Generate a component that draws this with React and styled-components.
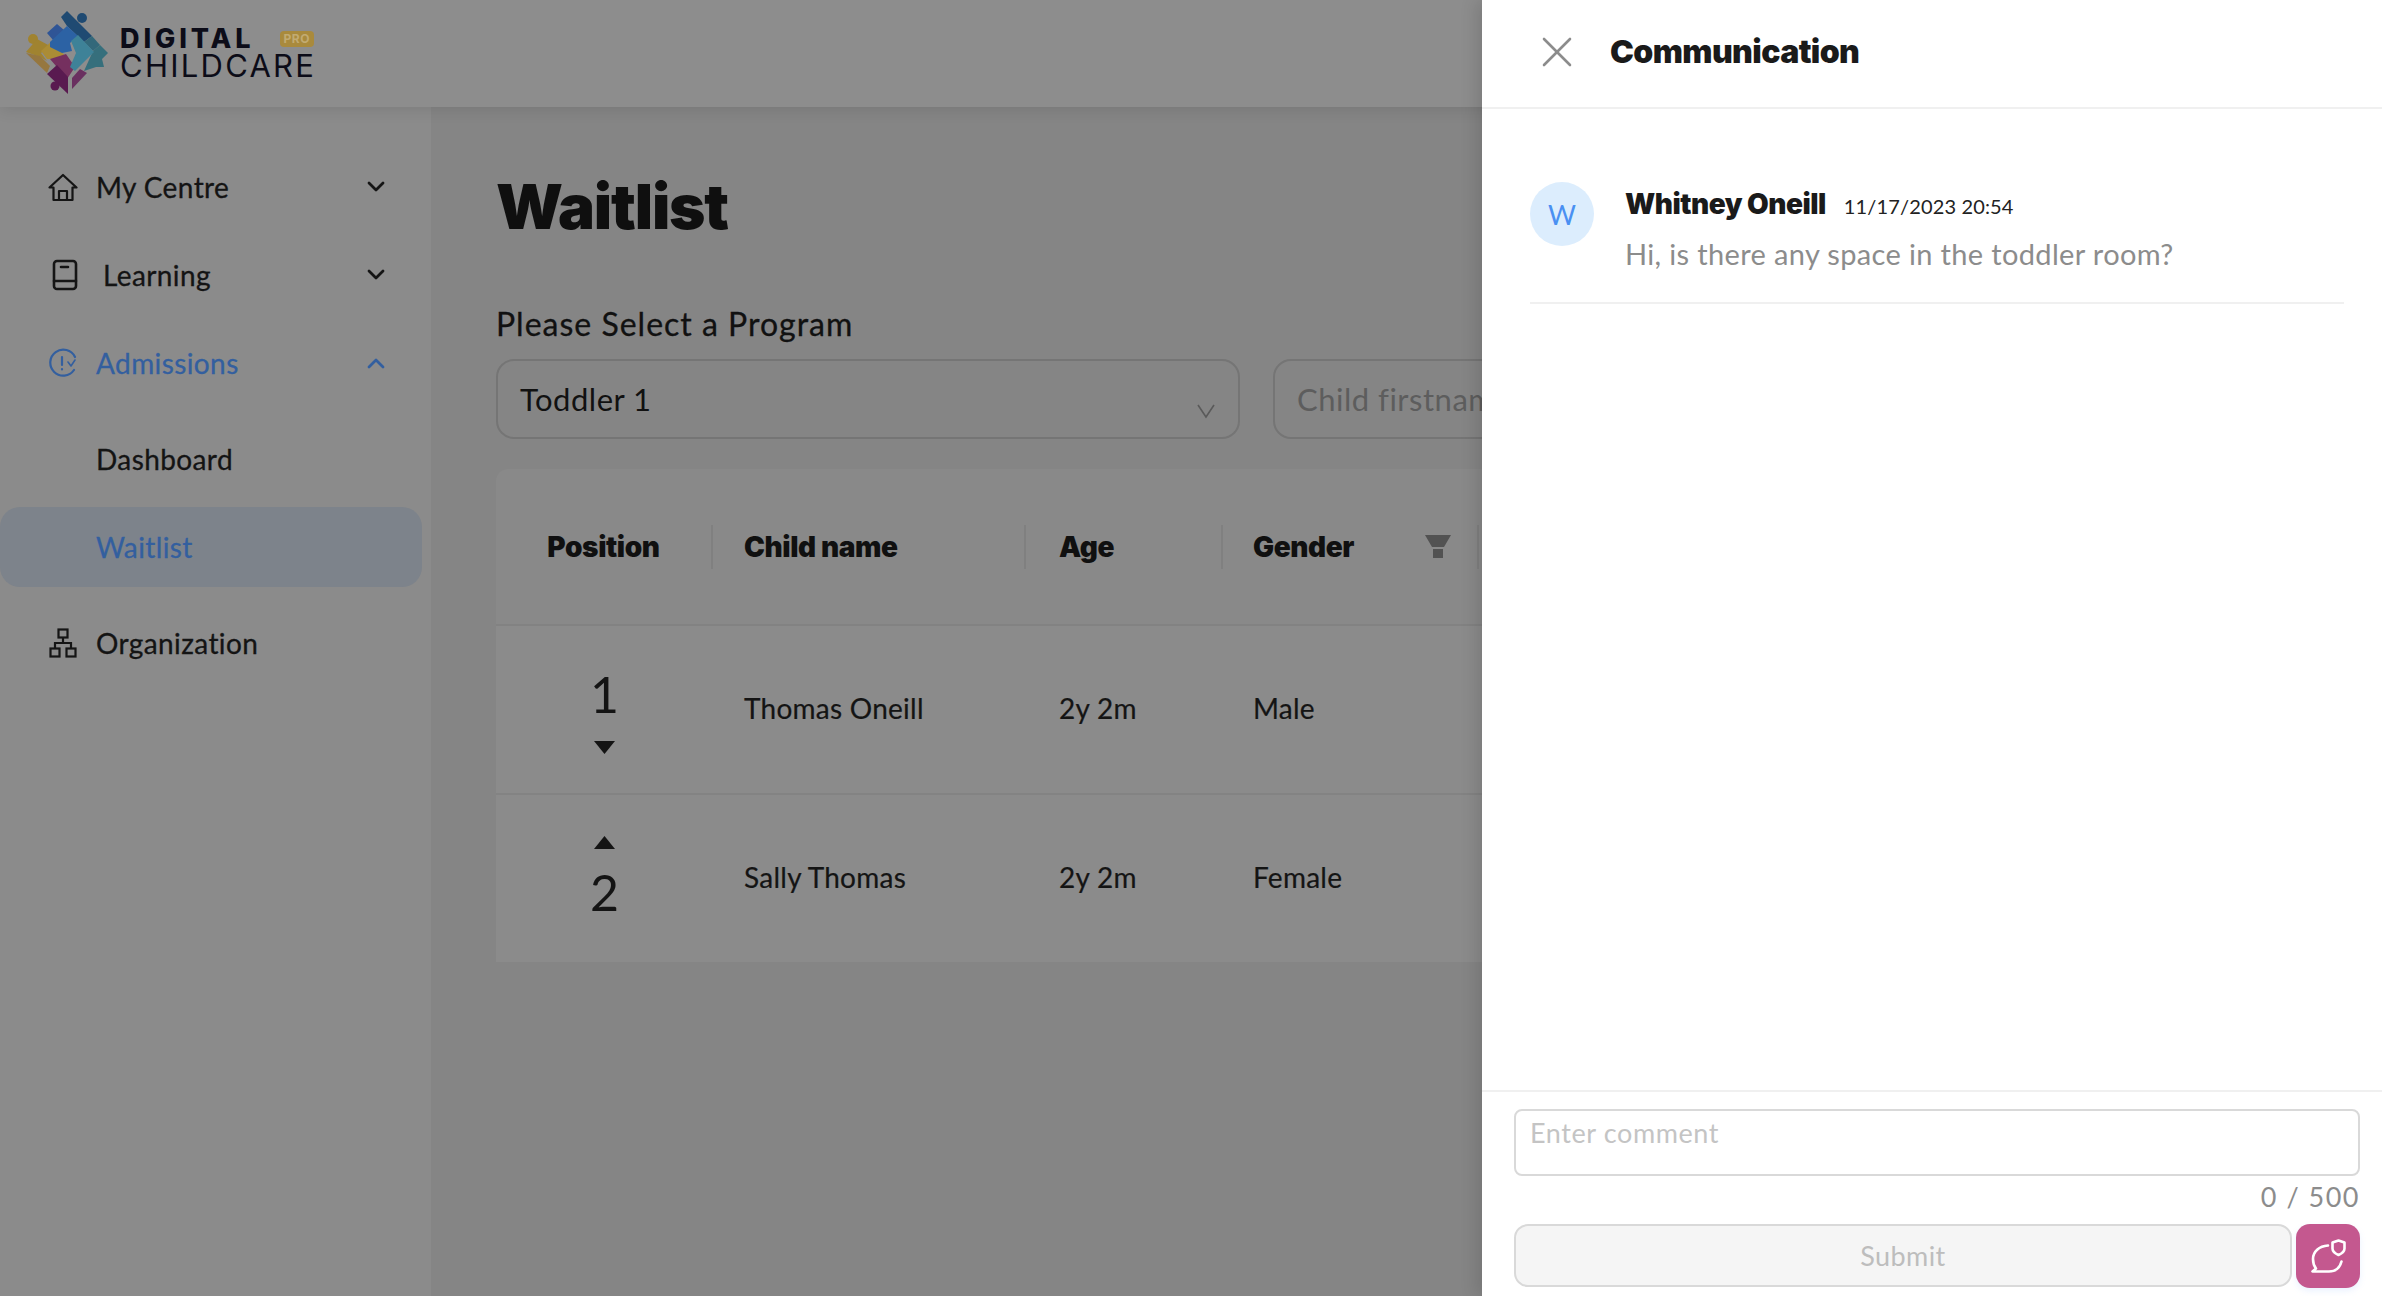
import React from 'react'
import styled, { createGlobalStyle } from 'styled-components'
import { X } from 'lucide-react'

const GlobalStyle = createGlobalStyle`
  html, body {
    margin: 0;
    padding: 0;
    height: 100%;
    overflow: hidden;
    font-family: 'Lato', 'Liberation Sans', sans-serif;
    background: #858585;
  }
  * { box-sizing: border-box; }
`

const Page = styled.div`
  position: relative;
  width: 2382px;
  height: 1296px;
  overflow: hidden;
  display: flex;
  flex-direction: column;
`

const Header = styled.header`
  height: 107px;
  flex: none;
  background: #8d8d8d;
  box-shadow: 0 3px 14px rgba(0, 0, 0, 0.1);
  display: flex;
  align-items: center;
  padding: 0 0 2px 26px;
  gap: 10px;
  z-index: 2;
`

const LogoText = styled.div`
  display: flex;
  flex-direction: column;
  width: 194px;
  font-family: 'Inter', sans-serif;
  color: #0c0c18;
`

const LogoTop = styled.div`
  display: flex;
  align-items: center;
  justify-content: space-between;
  font-size: 27px;
  line-height: 27px;
  font-weight: 800;
  letter-spacing: 3.9px;
`

const ProBadge = styled.span`
  height: 16px;
  padding: 0 4px;
  border-radius: 4px;
  background: #a98a3c;
  color: #c2ab72;
  font-size: 12px;
  line-height: 16px;
  font-weight: 700;
  letter-spacing: 0.5px;
`

const LogoBottom = styled.div`
  font-size: 31px;
  line-height: 28px;
  font-weight: 400;
  letter-spacing: 2.25px;
  white-space: nowrap;
`

const Body = styled.div`
  flex: 1;
  display: flex;
  min-height: 0;
`

const Sidebar = styled.aside`
  width: 431px;
  flex: none;
  background: #8b8b8b;
  padding: 40px 9px 0 0;
  display: flex;
  flex-direction: column;
  gap: 8px;
  box-shadow: 1px 0 0 #858585;
`

const NavItem = styled.div`
  height: 80px;
  display: flex;
  align-items: center;
  padding: 0 32px 0 96px;
  border-radius: 20px;
  font-size: 28px;
  letter-spacing: 0.4px;
  -webkit-text-stroke: 0.3px currentColor;
  color: ${p => (p.$active ? '#335f9f' : '#141414')};
  background: ${p => (p.$selected ? '#7d838b' : 'transparent')};
`

const NavIcon = styled.span`
  width: 32px;
  margin-left: ${p => p.$left || -49}px;
  margin-right: ${p => p.$right || 17}px;
  display: flex;
  justify-content: center;
`

const Chevron = styled.svg`
  margin-left: auto;
  margin-right: 4px;
  width: 20px;
  height: 14px;
`

const SubMenu = styled.div`
  display: flex;
  flex-direction: column;
  gap: 8px;
  margin: 8px 0;
`

const Main = styled.main`
  flex: 1;
  min-width: 0;
  padding: 64px 0 0 65px;
  background: #858585;
`

const Title = styled.h1`
  margin: 0 0 63px;
  font-family: 'Inter', sans-serif;
  font-size: 62px;
  line-height: 72px;
  font-weight: 900;
  color: #0f0f0f;
  letter-spacing: -1.2px;
`

const Label = styled.div`
  font-size: 32px;
  line-height: 36px;
  letter-spacing: 1px;
  -webkit-text-stroke: 0.3px currentColor;
  color: #111;
  margin-bottom: 17px;
`

const Filters = styled.div`
  display: flex;
  gap: 33px;
  margin-bottom: 30px;
`

const Field = styled.div`
  width: ${p => p.$width}px;
  height: 80px;
  flex: none;
  border: 2px solid #757575;
  border-radius: 18px;
  padding: 0 22px;
  display: flex;
  align-items: center;
  position: relative;
  font-size: 31px;
  letter-spacing: 0.5px;
  color: ${p => (p.$placeholder ? '#5d5d5d' : '#111')};
`

const SelectCaret = styled.svg`
  position: absolute;
  right: 22px;
  bottom: 18px;
  width: 20px;
  height: 16px;
`

const Table = styled.div`
  width: 1850px;
`

const HeadRow = styled.div`
  display: grid;
  grid-template-columns: 217px 313px 197px 256px 1fr;
  align-items: center;
  height: 157px;
  background: #898989;
  border-bottom: 2px solid #828282;
  border-radius: 12px 12px 0 0;
`

const HeadCell = styled.div`
  height: 44px;
  display: flex;
  align-items: center;
  justify-content: ${p => (p.$center ? 'center' : 'space-between')};
  padding: 0 ${p => (p.$center ? 0 : 26)}px 0 ${p => p.$pad || 0}px;
  border-right: 2px solid #808080;
  font-family: 'Inter', sans-serif;
  font-size: 28px;
  font-weight: 900;
  letter-spacing: -0.4px;
  color: #101010;
`

const Row = styled.div`
  display: grid;
  grid-template-columns: 217px 313px 197px 256px 1fr;
  align-items: center;
  height: ${p => p.$height}px;
  background: #8b8b8b;
  border-bottom: ${p => (p.$last ? 'none' : '2px solid #838383')};
`

const Cell = styled.div`
  padding: 0 0 3px ${p => p.$pad || 0}px;
  font-size: 28px;
  letter-spacing: 0.25px;
  -webkit-text-stroke: 0.2px currentColor;
  color: #141414;
`

const PositionCell = styled.div`
  display: flex;
  flex-direction: column;
  align-items: center;
  gap: ${p => p.$gap}px;
  padding: ${p => p.$top || 0}px 0 ${p => p.$bottom || 0}px;
`

const PositionNumber = styled.div`
  font-size: 50px;
  line-height: 48px;
  color: #141414;
`

const Caret = styled.svg`
  width: 21px;
  height: 13px;
  display: block;
`

const Drawer = styled.section`
  position: absolute;
  top: 0;
  right: 0;
  bottom: 0;
  width: 900px;
  background: #fff;
  display: flex;
  flex-direction: column;
  box-shadow: -6px 0 16px rgba(0, 0, 0, 0.12);
  z-index: 5;
`

const DrawerHead = styled.div`
  height: 109px;
  flex: none;
  border-bottom: 2px solid #f0f0f0;
  display: flex;
  align-items: center;
  padding: 0 0 4px 49px;
  gap: 27px;
`

const DrawerTitle = styled.h2`
  margin: 0;
  font-family: 'Inter', sans-serif;
  font-size: 32px;
  font-weight: 900;
  letter-spacing: -0.6px;
  color: #1a1a1a;
`

const Comments = styled.div`
  flex: 1;
  padding: 73px 38px 0 48px;
`

const Comment = styled.div`
  display: flex;
  gap: 31px;
  height: 122px;
  border-bottom: 2px solid #f0f0f0;
`

const Avatar = styled.div`
  width: 64px;
  height: 64px;
  flex: none;
  border-radius: 50%;
  background: #dcedfd;
  color: #4a90f2;
  font-size: 27px;
  display: flex;
  align-items: center;
  justify-content: center;
`

const CommentHead = styled.div`
  display: flex;
  align-items: baseline;
  gap: 18px;
  height: 52px;
  padding-top: 5px;
`

const Author = styled.span`
  font-family: 'Inter', sans-serif;
  font-size: 28px;
  font-weight: 900;
  letter-spacing: -0.5px;
  color: #1a1a1a;
`

const Stamp = styled.span`
  font-size: 20px;
  letter-spacing: 0.15px;
  color: #222;
`

const Message = styled.div`
  font-size: 29px;
  line-height: 40px;
  letter-spacing: 0.35px;
  color: #8c8c8c;
`

const Footer = styled.div`
  flex: none;
  border-top: 2px solid #f0f0f0;
  padding: 17px 22px 8px 32px;
`

const CommentBox = styled.div`
  height: 67px;
  border: 2px solid #d9d9d9;
  border-radius: 8px;
  padding: 5px 14px;
  font-size: 27px;
  letter-spacing: 0.6px;
  color: #c4c4c4;
`

const Counter = styled.div`
  text-align: right;
  font-size: 27px;
  line-height: 38px;
  letter-spacing: 1.5px;
  color: #8c8c8c;
  margin: 2px 0 8px;
`

const Actions = styled.div`
  display: flex;
  gap: 4px;
`

const SubmitButton = styled.button`
  flex: 1;
  height: 63px;
  background: #f5f5f5;
  border: 2px solid #d9d9d9;
  border-radius: 14px;
  font-family: inherit;
  font-size: 27px;
  letter-spacing: 0.4px;
  color: #bdbdbd;
`

const ChatButton = styled.button`
  width: 64px;
  height: 64px;
  flex: none;
  padding: 0;
  border: none;
  border-radius: 14px;
  background: #c4588f;
  box-shadow: 0 3px 6px rgba(120, 170, 255, 0.15);
`

const PuzzleLogo = () => (
  <svg width="84" height="84" viewBox="26 10 84 84">
    <circle cx="82" cy="17" r="5" fill="#1f4a72" />
    <polygon points="67,10 92,35 84,41 67,25 61,16" fill="#1f4a72" />
    <polygon points="47,32 57,23 64,29 53,39" fill="#2f5596" />
    <circle cx="33" cy="38" r="5" fill="#a08330" />
    <polygon points="26,51 37,38 50,45 41,52 47,60 40,56" fill="#a08330" />
    <polygon points="41,50 52,40 66,56 50,58 47,58" fill="#ab8c35" />
    <polygon points="26,52 40,55 50,65 47,72" fill="#96773f" />
    <polygon points="84,41 92,35 100,44 93,50" fill="#33687a" />
    <polygon points="93,50 100,44 108,52 102,58 104,66 96,66 84,70" fill="#366f7c" />
    <polygon points="50,41 67,25 78,35 70,42 72,50 62,52 50,46" fill="#2c62a4" />
    <polygon points="50,58 66,53 75,66 67,78 56,65" fill="#75305f" />
    <polygon points="72,77 80,68 87,72 72,88" fill="#6a3060" />
    <polygon points="47,73 57,64 68,76 68,93" fill="#591a50" />
    <circle cx="55" cy="85" r="4.5" fill="#591a50" />
    <polygon points="71,40 78,34 94,51 75,70 70,66 76,52" fill="#3e8298" />
  </svg>
)

const HomeIcon = () => (
  <svg width="30" height="30" viewBox="0 0 30 30" fill="none" stroke="#151515" strokeWidth="2.2" strokeLinejoin="round">
    <path d="M1.5 15.5 15 3l13.5 12.5h-4V28h-19V15.5z" />
    <path d="M11 28v-9h8v9" />
  </svg>
)

const BookIcon = () => (
  <svg width="26" height="32" viewBox="0 0 26 32" fill="none" stroke="#151515" strokeWidth="2.6" strokeLinecap="round" strokeLinejoin="round">
    <rect x="2" y="2" width="22" height="28" rx="3" />
    <path d="M2 22h22M9 8h7" />
  </svg>
)

const AdmissionIcon = () => (
  <svg width="30" height="30" viewBox="0 0 30 30" fill="none" stroke="#335f9f" strokeWidth="2.2" strokeLinecap="round" strokeLinejoin="round">
    <path d="M27 9A13 13 0 1 0 26 22" />
    <path d="M14 9v8M14 21v.5" />
    <path d="M20 14l3 4 4-6" strokeWidth="1.6" />
  </svg>
)

const OrgIcon = () => (
  <svg width="28" height="30" viewBox="0 0 28 30" fill="none" stroke="#151515" strokeWidth="2.2">
    <rect x="9.5" y="1.5" width="9" height="8" />
    <rect x="1.5" y="20.5" width="9" height="8" />
    <rect x="17.5" y="20.5" width="9" height="8" />
    <path d="M14 9.5V15M6 20.5V15h16v5.5" />
  </svg>
)

const ChevronDown = ({ up, color = '#151515' }) => (
  <Chevron viewBox="0 0 20 14" fill="none" stroke={color} strokeWidth="2.8" strokeLinecap="round" strokeLinejoin="round">
    <path d={up ? 'M3 11l7-7 7 7' : 'M3 3l7 7 7-7'} />
  </Chevron>
)

const FilterIcon = () => (
  <svg width="26" height="23" viewBox="0 0 26 23" fill="#525252">
    <path d="M0 0h26l-7 12H7z" />
    <rect x="8" y="14" width="10" height="9" />
  </svg>
)

const PositionCaret = ({ up }) => (
  <Caret viewBox="0 0 21 13" fill="#141414">
    <path d={up ? 'M10.5 0 21 13H0z' : 'M0 0h21L10.5 13z'} />
  </Caret>
)

const ChatShieldIcon = () => (
  <svg width="64" height="64" viewBox="0 0 64 64" fill="none" stroke="#fff" strokeWidth="2.6" strokeLinecap="round" strokeLinejoin="round">
    <path d="M32 21.5C23 22 17 28 17 35c0 4 1 7 3 9.5L16.500 47.500H33c7 0 11-4 12.500-10" />
    <path d="M42.500 16.500 48.500 18.500v6c0 3-2.500 5-6 6.500-3.500-1.500-6-3.500-6-6.500v-6z" />
  </svg>
)

const App = () => {
  return (
    <Page>
      <GlobalStyle />
      <Header>
        <PuzzleLogo />
        <LogoText>
          <LogoTop>
            DIGITAL
            <ProBadge>PRO</ProBadge>
          </LogoTop>
          <LogoBottom>CHILDCARE</LogoBottom>
        </LogoText>
      </Header>
      <Body>
        <Sidebar>
          <NavItem>
            <NavIcon><HomeIcon /></NavIcon>
            My Centre
            <ChevronDown />
          </NavItem>
          <NavItem>
            <NavIcon $left={-47} $right={22}><BookIcon /></NavIcon>
            Learning
            <ChevronDown />
          </NavItem>
          <NavItem $active>
            <NavIcon><AdmissionIcon /></NavIcon>
            Admissions
            <ChevronDown up color="#335f9f" />
          </NavItem>
          <SubMenu>
            <NavItem>Dashboard</NavItem>
            <NavItem $active $selected>Waitlist</NavItem>
          </SubMenu>
          <NavItem>
            <NavIcon><OrgIcon /></NavIcon>
            Organization
          </NavItem>
        </Sidebar>
        <Main>
          <Title>Waitlist</Title>
          <Label>Please Select a Program</Label>
          <Filters>
            <Field $width={744}>
              Toddler 1
              <SelectCaret viewBox="0 0 20 16" fill="none" stroke="#5a5a5a" strokeWidth="1.6">
                <path d="M2 2l8 12 8-12" />
              </SelectCaret>
            </Field>
            <Field $width={400} $placeholder>Child firstname</Field>
          </Filters>
          <Table>
            <HeadRow>
              <HeadCell $center>Position</HeadCell>
              <HeadCell $pad={31}>Child name</HeadCell>
              <HeadCell $pad={33}>Age</HeadCell>
              <HeadCell $pad={30}>
                Gender
                <FilterIcon />
              </HeadCell>
            </HeadRow>
            <Row $height={169}>
              <PositionCell $gap={23} $top={4}>
                <PositionNumber>1</PositionNumber>
                <PositionCaret />
              </PositionCell>
              <Cell $pad={31}>Thomas Oneill</Cell>
              <Cell $pad={33}>2y 2m</Cell>
              <Cell $pad={30}>Male</Cell>
            </Row>
            <Row $height={167} $last>
              <PositionCell $gap={19} $bottom={6}>
                <PositionCaret up />
                <PositionNumber>2</PositionNumber>
              </PositionCell>
              <Cell $pad={31}>Sally Thomas</Cell>
              <Cell $pad={33}>2y 2m</Cell>
              <Cell $pad={30}>Female</Cell>
            </Row>
          </Table>
        </Main>
      </Body>
      <Drawer>
        <DrawerHead>
          <X size={52} color="#8c8c8c" strokeWidth={1.2} />
          <DrawerTitle>Communication</DrawerTitle>
        </DrawerHead>
        <Comments>
          <Comment>
            <Avatar>W</Avatar>
            <div>
              <CommentHead>
                <Author>Whitney Oneill</Author>
                <Stamp>11/17/2023 20:54</Stamp>
              </CommentHead>
              <Message>Hi, is there any space in the toddler room?</Message>
            </div>
          </Comment>
        </Comments>
        <Footer>
          <CommentBox>Enter comment</CommentBox>
          <Counter>0 / 500</Counter>
          <Actions>
            <SubmitButton>Submit</SubmitButton>
            <ChatButton><ChatShieldIcon /></ChatButton>
          </Actions>
        </Footer>
      </Drawer>
    </Page>
  )
}

export default App
